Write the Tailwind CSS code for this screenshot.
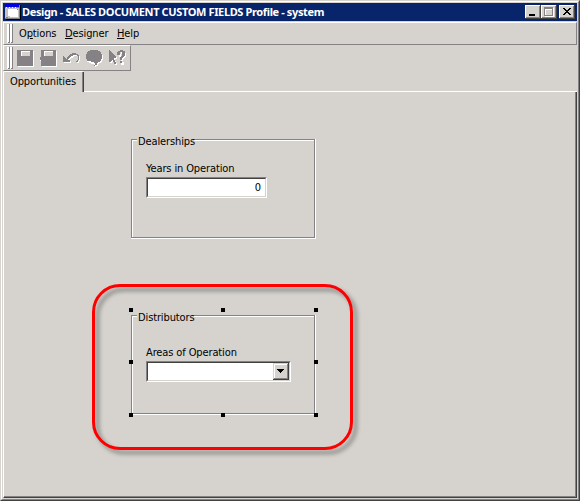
<!DOCTYPE html>
<html lang="en">
<head>
<meta charset="utf-8">
<title>Design - SALES DOCUMENT CUSTOM FIELDS Profile - system</title>
<script src="https://cdn.jsdelivr.net/npm/@tailwindcss/browser@4"></script>
</head>
<body class="h-[501px] w-[580px] overflow-hidden bg-[#d6d3ce] font-['DejaVu_Sans_Condensed','DejaVu_Sans',sans-serif] text-[11px] leading-[14px] tracking-[-0.12px] text-black">
<div class="h-[501px] w-[580px] border-t border-r border-b border-l border-t-[#d6d3ce] border-l-[#d6d3ce] border-r-[#424142] border-b-[#424142]">
<div class="flex h-[499px] w-[578px] flex-col border border-t-white border-l-white border-r-[#848284] border-b-[#848284] px-px pt-px pb-px">
  <!-- Title bar -->
  <header class="flex h-[18px] shrink-0 items-center bg-[#08246b] pl-0.5 pr-0.5 text-white">
    <svg class="h-4 w-4 shrink-0" viewBox="0 0 16 16" shape-rendering="crispEdges">
      <path fill="#000" d="M1 1h15v15H1z"/><path fill="#848284" d="M0 1h15v14H0z"/><path fill="#c6c3c6" d="M0 4h14v10H0z"/><path fill="#0000e0" d="M0 0h14v3H0z"/><path fill="#fff" d="M1 3h1v1H1zM4 3h1v1H4zM7 3h1v1H7zM10 3h1v1h-1zM3 5h10v7H3zM5 12h8v1H5z"/><path fill="#ff9aa8" d="M2 6h1v1H2zM2 9h1v1H2zM2 11h1v1H2z"/><path fill="#848284" d="M1 13h2v1H1zM12 5h1v1h-1z"/>
    </svg>
    <h1 class="ml-px grow whitespace-nowrap font-['Noto_Sans',sans-serif] text-[11px] font-bold tracking-[-0.37px]">Design - SALES DOCUMENT CUSTOM FIELDS Profile - system</h1>
    <div class="flex text-black">
      <svg class="h-3.5 w-4" viewBox="0 0 16 14" shape-rendering="crispEdges"><path fill="#424142" d="M0 0h16v14H0z"/><path fill="#fff" d="M0 0h15v13H0z"/><path fill="#848284" d="M1 1h14v12H1z"/><path fill="#d6d3ce" d="M1 1h13v11H1z"/><path d="M4 9h6v2H4z"/></svg>
      <svg class="h-3.5 w-4" viewBox="0 0 16 14" shape-rendering="crispEdges"><path fill="#424142" d="M0 0h16v14H0z"/><path fill="#fff" d="M0 0h15v13H0z"/><path fill="#848284" d="M1 1h14v12H1z"/><path fill="#d6d3ce" d="M1 1h13v11H1z"/><path fill="#fff" d="M4 3h9v9H4z"/><path fill="#848284" d="M3 2h9v9H3z"/><path fill="#fff" d="M4 4h7v6H4z"/><path fill="#d6d3ce" d="M5 5h6v5H5z"/></svg>
      <svg class="ml-0.5 h-3.5 w-4" viewBox="0 0 16 14" shape-rendering="crispEdges"><path fill="#424142" d="M0 0h16v14H0z"/><path fill="#fff" d="M0 0h15v13H0z"/><path fill="#848284" d="M1 1h14v12H1z"/><path fill="#d6d3ce" d="M1 1h13v11H1z"/><path d="M4 3h2v1H4zM10 3h2v1h-2zM5 4h2v1H5zM9 4h2v1H9zM6 5h4v1H6zM7 6h2v1H7zM6 7h4v1H6zM5 8h2v1H5zM9 8h2v1H9zM4 9h2v1H4zM10 9h2v1h-2z"/></svg>
    </div>
  </header>
  <!-- Menu bar -->
  <nav class="mt-px flex h-[23px] shrink-0 items-center border border-t-white border-l-white border-r-[#848284] border-b-[#848284] pl-[3px]">
    <svg class="h-[19px] w-[7px] shrink-0" viewBox="0 0 7 19" shape-rendering="crispEdges"><path fill="#fff" d="M0 0h2v19H0zM3 0h2v19H3z"/><path fill="#848284" d="M2 0h1v19H2zM5 0h1v19H5zM1 18h2v1H1zM4 18h2v1H4z"/></svg>
    <span class="ml-[5px] w-[46px] whitespace-nowrap">O<u>p</u>tions</span>
    <span class="w-[52px] whitespace-nowrap"><u>D</u>esigner</span>
    <span class="whitespace-nowrap"><u>H</u>elp</span>
  </nav>
  <!-- Toolbar -->
  <div class="flex h-[26px] w-[128px] shrink-0 items-center border border-t-white border-l-white border-r-[#848284] border-b-[#848284] pl-[3px]">
    <svg class="h-[22px] w-[7px] shrink-0" viewBox="0 0 7 22" shape-rendering="crispEdges"><path fill="#fff" d="M0 0h2v22H0zM3 0h2v22H3z"/><path fill="#848284" d="M2 0h1v22H2zM5 0h1v22H5zM1 21h2v1H1zM4 21h2v1H4z"/></svg>
    <svg class="ml-[2px] h-[18px] w-[18px] shrink-0" viewBox="0 0 18 18" shape-rendering="crispEdges"><path fill="#fff" d="M2 2h16v16H2z"/><path fill="#848284" d="M1 1h16v16H1z"/><path fill="#d6d3ce" d="M5 2h9v5H5z"/><path fill="#fff" d="M5 2h9v1H5zM5 2h1v5H5z"/></svg>
    <svg class="ml-[5px] h-[18px] w-[18px] shrink-0" viewBox="0 0 18 18" shape-rendering="crispEdges"><path fill="#fff" d="M3 2h15v16H3zM1 8h2v4H1z"/><path fill="#848284" d="M2 1h15v16H2zM1 8h1v3H1z"/><path fill="#d6d3ce" d="M5 2h9v5H5z"/><path fill="#fff" d="M5 2h9v1H5zM5 2h1v5H5z"/></svg>
    <svg class="ml-[5px] h-[18px] w-[18px] shrink-0" viewBox="0 0 18 18" shape-rendering="crispEdges"><path fill="#fff" d="M2 8h1v1h1v1h1v1h1V9h1V8h1V7h1V6h2V5h4v1h2v1h1v5h-1v2h-2v-1h1v-1h1V8h-1V7h-4v1h-1v1H9v1H8v1H7v1h2v2H2z"/><path fill="#848284" d="M1 7h1v1h1v1h1v1h1V8h1V7h1V6h1V5h2V4h4v1h2v1h1v5h-1v2h-2v-1h1v-1h1V7h-1V6h-4v1H9v1H8v1H7v1H6v1h2v2H1z"/></svg>
    <svg class="ml-[5px] h-[18px] w-[18px] shrink-0" viewBox="0 0 18 18" shape-rendering="crispEdges"><path fill="#fff" d="M6 2h8v1h2v2h1v1h1v5h-1v2h-1v1h-2v1h-1v2h-2v1h-1v-1H9v-2H6v-1H4v-1H2V9h1z"/><path fill="#848284" d="M5 1h8v1h2v1h1v2h1v5h-1v2h-1v1h-2v1h-1v2h-2v1H9v-1h1v-2H6v-1H4v-1H2v-2H1V5h1V3h1V2h2z"/><path fill="#fff" d="M4 12h2v1H4zM6 13h3v1H6z"/></svg>
    <svg class="ml-[5px] h-[18px] w-[18px] shrink-0" viewBox="0 0 18 18" shape-rendering="crispEdges"><path fill="#fff" d="M2 2h1v1h1v1h1v1h1v1h1v1h1v1h1v2H7v2h1v2h1v2H7v-2H6v-2H5v1H4v1H2zM10 5h3v3h-2V6zM13 3h4v1h1v4h-1v1h-1v1h-1v2h-2V9h1V8h1V5h-2zM13 13h3v3h-3z"/><path fill="#848284" d="M1 1h1v1h1v1h1v1h1v1h1v1h1v1h1v2H6v2h1v2h1v2H6v-2H5v-2H4v1H3v1H1zM9 3h1V2h2V1h3v1h2v5h-1v1h-1v1h-1v2h-2V8h1V7h1V3h-2v3H9zM12 12h2v2h-2z"/></svg>
  </div>
  <!-- Tab strip and page -->
  <main class="flex min-h-0 grow flex-col">
    <div class="flex h-[21px] shrink-0">
      <div class="w-[81px] shrink-0 rounded-t-[2px] border-t border-l border-white">
        <div class="h-full border-r border-[#424142]"><div class="h-full whitespace-nowrap border-r border-[#848284] pt-[3px] pl-1.5">Opportunities</div></div>
      </div>
      <div class="grow border-b border-white"></div>
    </div>
    <div class="min-h-0 grow border-l border-r border-b border-l-white border-r-[#424142] border-b-[#424142]">
      <div class="relative h-full border-r border-b border-[#848284] pt-[47px] pl-[127px]">
        <section class="h-[100px] w-[185px] border-r border-b border-white">
          <div class="h-[99px] w-[184px] border border-[#848284]">
            <div class="h-full border-t border-l border-white pl-[4px]">
              <h2 class="-mt-[6px] h-3.5 w-[57px] whitespace-nowrap bg-[#d6d3ce] px-px leading-[14px]">Dealerships</h2>
              <div class="mt-[13px] ml-[9px]">
                <label class="block h-[15px] whitespace-nowrap">Years in Operation</label>
                <div class="h-[21px] w-[121px] border border-t-[#848284] border-l-[#848284] border-r-white border-b-white"><div class="h-[19px] border border-t-[#424142] border-l-[#424142] border-r-[#d6d3ce] border-b-[#d6d3ce] bg-white pr-1 text-right leading-[18px]">0</div></div>
              </div>
            </div>
          </div>
        </section>
        <section class="relative mt-[76px] h-[100px] w-[185px] border-r border-b border-white">
          <div class="h-[99px] w-[184px] border border-[#848284]">
            <div class="h-full border-t border-l border-white pl-[4px]">
              <h2 class="-mt-[6px] h-3.5 w-[57px] whitespace-nowrap bg-[#d6d3ce] px-px leading-[14px]">Distributors</h2>
              <div class="mt-[21px] ml-[9px]">
                <label class="block h-[15px] whitespace-nowrap">Areas of Operation</label>
                <div class="h-[21px] w-[145px] border border-t-[#848284] border-l-[#848284] border-r-white border-b-white"><div class="flex h-[19px] justify-end border border-t-[#424142] border-l-[#424142] border-r-[#d6d3ce] border-b-[#d6d3ce] bg-white"><svg class="h-[17px] w-4" viewBox="0 0 16 17" shape-rendering="crispEdges"><path fill="#424142" d="M0 0h16v17H0z"/><path fill="#d6d3ce" d="M0 0h15v16H0z"/><path fill="#848284" d="M1 1h14v15H1z"/><path fill="#fff" d="M1 1h13v14H1z"/><path fill="#d6d3ce" d="M2 2h12v13H2z"/><path d="M4 6h7v1H4zM5 7h5v1H5zM6 8h3v1H6zM7 9h1v1H7z"/></svg></div></div>
              </div>
            </div>
          </div>
          <!-- Selection handles -->
          <svg class="absolute -top-[7px] -left-[2px] h-[109px] w-[189px]" viewBox="0 0 189 109" shape-rendering="crispEdges"><path d="M0 0h4v4H0zM92 0h4v4h-4zM185 0h4v4h-4zM0 52h4v4H0zM185 52h4v4h-4zM0 105h4v4H0zM92 105h4v4h-4zM185 105h4v4h-4z"/></svg>
        </section>
        <div class="absolute top-[192px] left-[88px] h-[166px] w-[261px] rounded-[28px] border-3 border-[#ff0000] drop-shadow-[4px_4px_2px_rgba(0,0,0,0.4)]"></div>
      </div>
    </div>
  </main>
</div>
</div>
</body>
</html>
